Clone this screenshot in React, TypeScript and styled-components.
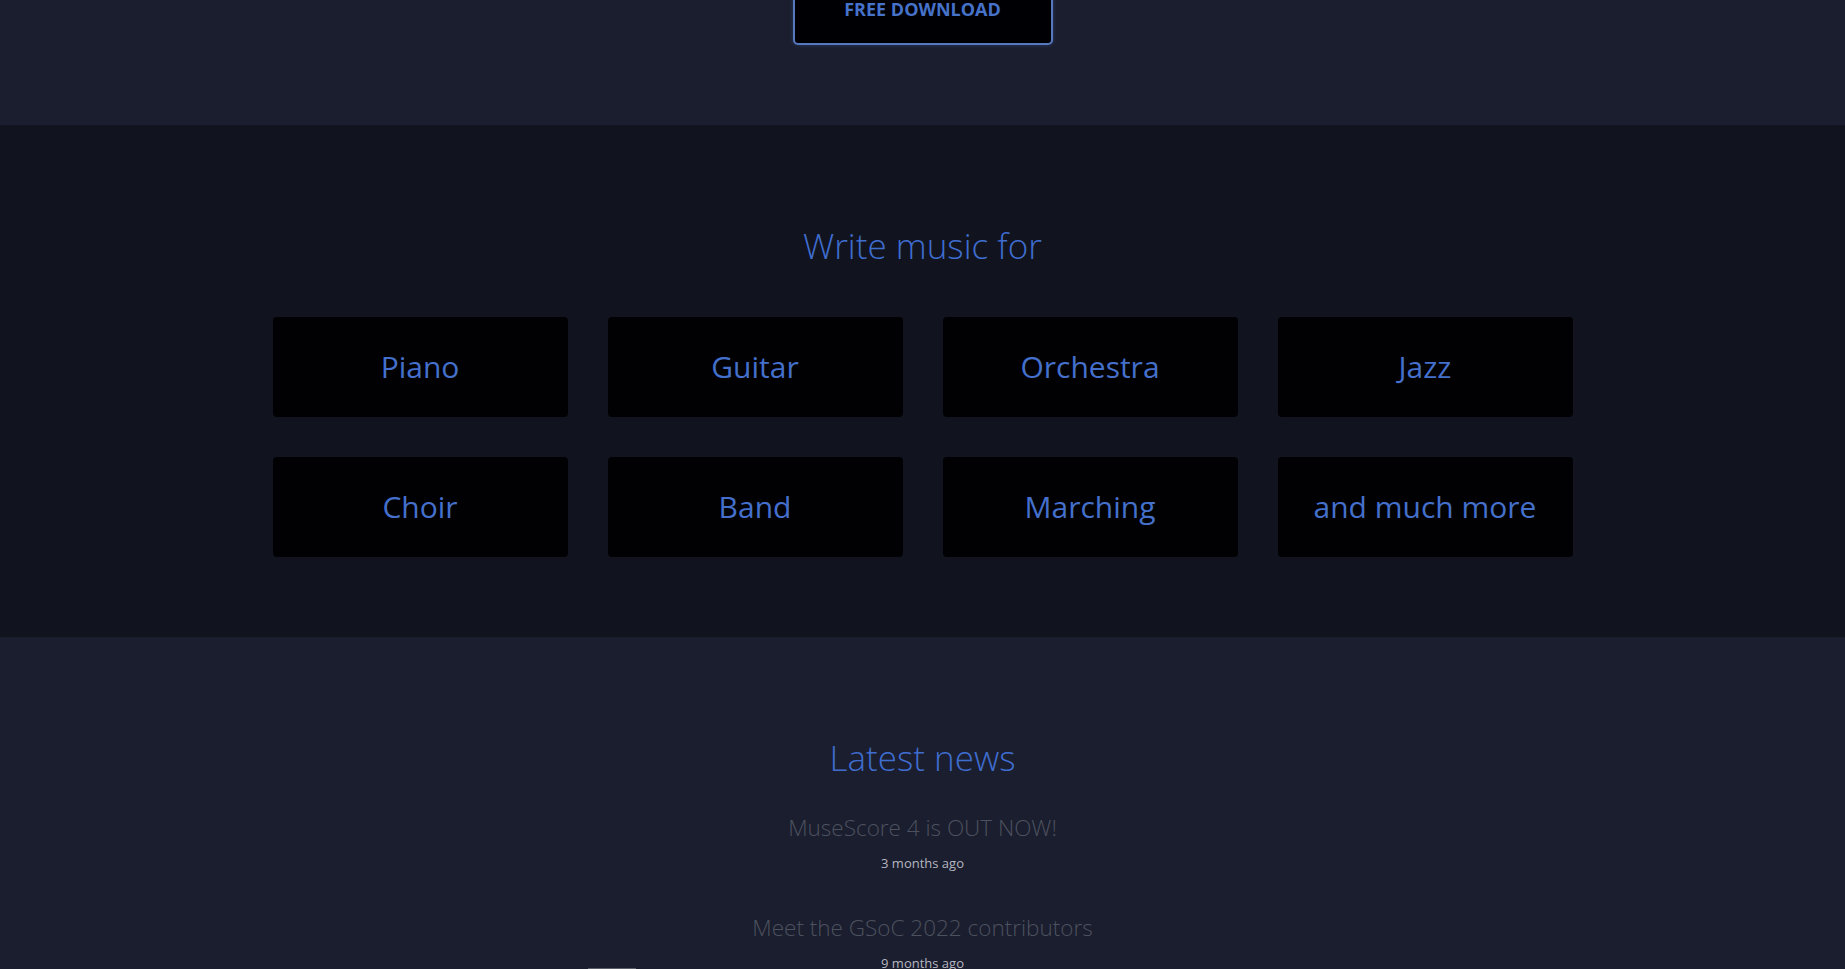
import React from "react";
import styled, { createGlobalStyle } from "styled-components";

const GlobalStyle = createGlobalStyle`
  html, body { margin: 0; padding: 0; background: #1b1e2e; overflow: hidden; }
  body { font-family: "Open Sans", "Noto Sans", sans-serif; }
  * { box-sizing: border-box; }
`;

const Page = styled.div`
  width: 1845px;
  height: 969px;
  overflow: hidden;
`;

const Hero = styled.section`
  background: #1b1e2e;
  height: 125px;
  display: flex;
  justify-content: center;
  align-items: flex-start;
`;

const DownloadButton = styled.a`
  display: flex;
  align-items: flex-end;
  justify-content: center;
  width: 260px;
  height: 62px;
  margin-top: -17px;
  padding-bottom: 24px;
  background: #000004;
  border: 2px solid #5679bd;
  border-radius: 5px;
  color: #4672c9;
  font-family: "Open Sans", sans-serif;
  font-weight: 700;
  font-size: 18px;
  line-height: 20px;
  text-decoration: none;
  box-shadow: 0 0 4px rgba(70, 110, 190, 0.35);
`;

const Section = styled.section<{ $dark?: boolean }>`
  background: ${(p) => (p.$dark ? "#11141f" : "#1b1e2e")};
  padding: ${(p) => (p.$dark ? "101px 0 80px" : "101px 0 0")};
  display: flex;
  flex-direction: column;
  align-items: center;
`;

const Heading = styled.h2`
  margin: 0;
  font-family: "Open Sans", sans-serif;
  font-weight: 300;
  font-size: 35px;
  line-height: 40px;
  color: #3f6dd0;
  text-align: center;
`;

const Grid = styled.div`
  margin-top: 51px;
  display: grid;
  grid-template-columns: repeat(4, 295px);
  grid-auto-rows: 100px;
  column-gap: 40px;
  row-gap: 40px;
`;

const Card = styled.a`
  display: flex;
  align-items: center;
  justify-content: center;
  padding-bottom: 1px;
  background: #010104;
  border-radius: 4px;
  color: #4470cc;
  font-family: "Open Sans", sans-serif;
  font-size: 30px;
  font-weight: 400;
  text-decoration: none;
`;

const NewsList = styled.div`
  margin-top: 34px;
  display: flex;
  flex-direction: column;
  align-items: center;
  gap: 39px;
`;

const NewsItem = styled.div`
  display: flex;
  flex-direction: column;
  align-items: center;
  gap: 9px;
`;

const NewsTitle = styled.a`
  font-family: "Open Sans", sans-serif;
  font-weight: 300;
  font-size: 22.5px;
  line-height: 32px;
  color: #4c515f;
  text-decoration: none;
`;

const NewsDate = styled.span`
  font-family: "Open Sans", sans-serif;
  font-size: 13px;
  line-height: 20px;
  color: #b4b6c0;
`;

const Thumb = styled.div`
  width: 48px;
  height: 4px;
  background: #5a5e68;
  margin-top: -5px;
  margin-left: -622px;
`;

const categories = ["Piano", "Guitar", "Orchestra", "Jazz", "Choir", "Band", "Marching", "and much more"];

const news = [
  { title: "MuseScore 4 is OUT NOW!", date: "3 months ago" },
  { title: "Meet the GSoC 2022 contributors", date: "9 months ago" },
];

export default function App() {
  return (
    <Page>
      <GlobalStyle />
      <Hero>
        <DownloadButton href="#">FREE DOWNLOAD</DownloadButton>
      </Hero>
      <Section $dark>
        <Heading>Write music for</Heading>
        <Grid>
          {categories.map((c) => (
            <Card key={c} href="#">{c}</Card>
          ))}
        </Grid>
      </Section>
      <Section>
        <Heading>Latest news</Heading>
        <NewsList>
          {news.map((n) => (
            <NewsItem key={n.title}>
              <NewsTitle href="#">{n.title}</NewsTitle>
              <NewsDate>{n.date}</NewsDate>
            </NewsItem>
          ))}
        </NewsList>
        <Thumb />
      </Section>
    </Page>
  );
}
